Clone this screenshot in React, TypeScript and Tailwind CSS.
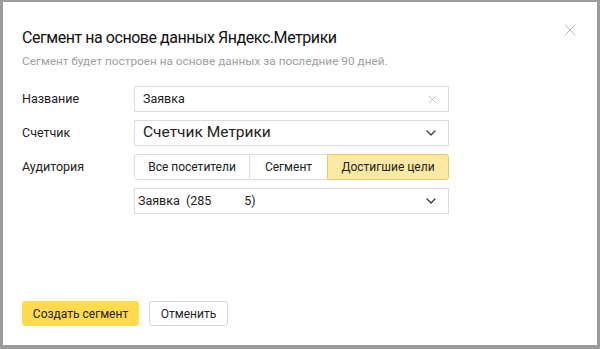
import { X, ChevronDown } from "lucide-react";

const font = { fontFamily: "Roboto, 'Liberation Sans', Arial, sans-serif" };

function Row({ label, children }: { label: string; children: React.ReactNode }) {
    return (
        <div className="flex items-center">
            <div className="w-[112px] text-[12.5px] text-[#222]">{label}</div>
            <div className="w-[315px]">{children}</div>
        </div>
    );
}

export default function App() {
    return (
        <div className="h-[349px] w-[600px] bg-[#9c9c9c] pl-[3px] pt-[2px] pr-[3px] pb-[4px]" style={font}>
            <div className="relative flex h-full flex-col bg-white px-[19px]">
                <button className="absolute right-[17px] top-[18px] text-[#b5b5b5]">
                    <X size={20} strokeWidth={1.2} />
                </button>
                <h1 className="mt-[25px] text-[16px] leading-[22px] tracking-[-0.45px] text-[#111]">
                    Сегмент на основе данных Яндекс.Метрики
                </h1>
                <p className="mt-[5px] text-[11.8px] leading-[14px] text-[#a0a0a0]">
                    Сегмент будет построен на основе данных за последние 90 дней.
                </p>
                <div className="mt-[18px] flex flex-col gap-[8px]">
                    <Row label="Название">
                        <div className="flex h-[26px] items-center justify-between border border-[#dcdcdc] pl-[8px] pr-[9px] text-[12.5px] text-[#222]">
                            <span>Заявка</span>
                            <X size={13} strokeWidth={1.2} className="text-[#a8a8a8]" />
                        </div>
                    </Row>
                    <Row label="Счетчик">
                        <div className="flex h-[26px] items-center justify-between border border-[#dcdcdc] pl-[8px] pr-[9px] text-[15.5px] text-[#222]">
                            <span>Счетчик Метрики</span>
                            <ChevronDown size={16} strokeWidth={1.8} className="text-[#333]" />
                        </div>
                    </Row>
                    <Row label="Аудитория">
                        <div className="flex h-[26px] text-[12px] text-[#222]">
                            <div className="flex w-[116px] items-center justify-center rounded-l-[3px] border border-[#dcdcdc]">
                                Все посетители
                            </div>
                            <div className="flex w-[77px] items-center justify-center border-y border-[#dcdcdc]">
                                Сегмент
                            </div>
                            <div className="flex flex-1 items-center justify-center rounded-r-[3px] border border-[#e6c96a] bg-[#fee9a3]">
                                Достигшие цели
                            </div>
                        </div>
                    </Row>
                    <Row label="">
                        <div className="flex h-[26px] items-center justify-between border border-[#dcdcdc] pl-[3px] pr-[9px] text-[12.5px] text-[#222]">
                            <span>
                                Заявка &nbsp;(285<span className="inline-block w-[33px]" />5)
                            </span>
                            <ChevronDown size={16} strokeWidth={1.8} className="text-[#333]" />
                        </div>
                    </Row>
                </div>
                <div className="mt-auto mb-[19px] flex gap-[10px]">
                    <button className="h-[25px] w-[117px] rounded-[3px] bg-[#ffdb4d] text-[12px] text-[#222]">
                        Создать сегмент
                    </button>
                    <button className="h-[25px] w-[79px] rounded-[3px] border border-[#d6d6d6] bg-white text-[12px] text-[#222]">
                        Отменить
                    </button>
                </div>
            </div>
        </div>
    );
}
